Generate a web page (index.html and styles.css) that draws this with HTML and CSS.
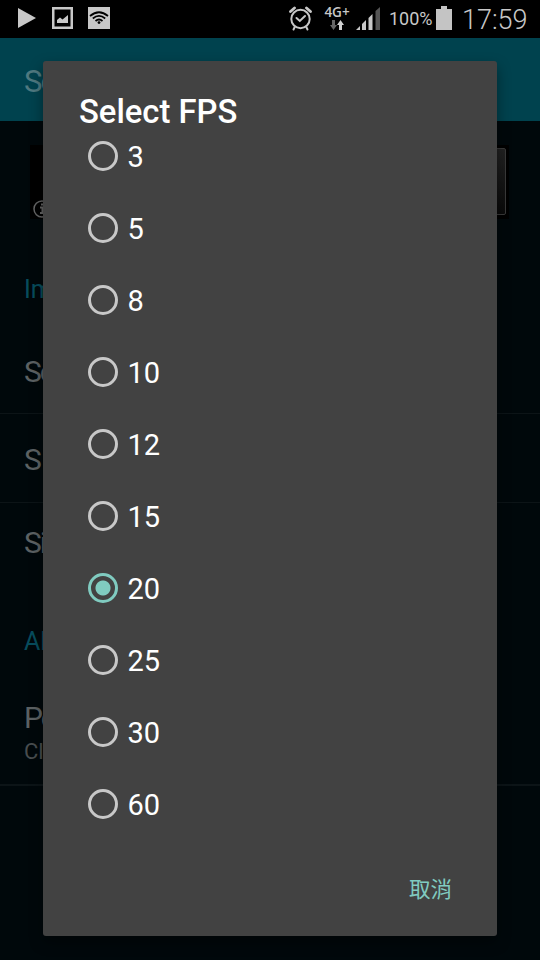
FILE: index.html
```
<!DOCTYPE html>
<html lang="zh-Hant">

<head>
  <meta charset="utf-8">
  <title>Select FPS</title>
  <link rel="stylesheet" href="styles.css">
</head>

<body>
  <div class="status-bar">
    <div class="status-left">
      <svg width="18" height="20" viewBox="0 0 18 20"><path d="M0 0L18 10L0 20Z" fill="#c8c8c8"/></svg>
      <svg width="21" height="22" viewBox="0 0 21 22">
        <path fill="#c8c8c8" fill-rule="evenodd" d="M0 0H21V22H0ZM2.500 2.500V19.500H18.500V2.500Z"/>
        <path fill="#c8c8c8" d="M5 16V13L8 10.500L10.500 12.500L16 8V16Z"/>
      </svg>
      <svg width="22" height="22" viewBox="0 0 22 22">
        <path fill="#c8c8c8" d="M0 0H22V22H0Z"/>
        <g fill="none" stroke="#000" stroke-width="1.7">
          <path d="M2 9Q11 1.5 20 9"/>
          <path d="M4.8 11.5Q11 6.2 17.2 11.5"/>
          <path d="M7.5 14Q11 11 14.5 14"/>
        </g>
        <circle cx="11" cy="15.6" r="1.4"/>
      </svg>
    </div>
    <div class="status-right">
      <svg class="alarm" width="23" height="25" viewBox="0 0 23 25" fill="none" stroke="#c8c8c8" stroke-linecap="round">
        <circle cx="11.5" cy="13" r="9.2" stroke-width="2"/>
        <path d="M7.5 12L10.8 15L16 10" stroke-width="2"/>
        <path d="M1.5 5.5L5.5 2M21.5 5.5L17.5 2" stroke-width="2.8"/>
        <path d="M5.5 21.5L4.5 23.5M17.5 21.5L18.5 23.5" stroke-width="2"/>
      </svg>
      <div class="network">
        <span>4G+</span>
        <svg width="14" height="10" viewBox="0 0 14 10">
          <path fill="#666" d="M2 0H5V5H7L3.5 10L0 5H2Z"/>
          <path fill="#d0d0d0" d="M9 10H12V5H14L10.5 0L7 5H9Z"/>
        </svg>
      </div>
      <svg class="signal" width="24" height="23" viewBox="0 0 24 23">
        <path fill="#c8c8c8" d="M0 23L4 19V23ZM6 17L10 13V23H6ZM12.500 11L16.500 7V23H12.500Z"/>
        <path fill="#555" d="M19.500 4L24 0V23H19.500Z"/>
      </svg>
      <span class="percent">100%</span>
      <svg class="battery" width="16" height="24" viewBox="0 0 16 24"><path fill="#c4c4c4" d="M5 0H11V3H16V24H0V3H5Z"/></svg>
      <span class="clock">17:59</span>
    </div>
  </div>

  <div class="settings">
    <div class="action-bar">Se</div>
    <div class="preview">
      <div class="preview-strip">
        <svg width="18" height="18" viewBox="0 0 18 18">
          <circle cx="9" cy="9" r="8" fill="none" stroke="#666" stroke-width="1.5"/>
          <path d="M7 7.500H9.500V13M7 13H12M8 4.500H10" fill="none" stroke="#666" stroke-width="2"/>
        </svg>
        <div class="preview-button"></div>
      </div>
    </div>
    <div class="category first">Im</div>
    <div class="row">Se</div>
    <div class="row second">S</div>
    <div class="row last">Si</div>
    <div class="category">Al</div>
    <div class="row summary">
      <span>Pe</span>
      <small>Cl</small>
    </div>
  </div>

  <div class="dialog">
    <h1>Select FPS</h1>
    <ul class="options">
      <li><i class="radio"></i>3</li>
      <li><i class="radio"></i>5</li>
      <li><i class="radio"></i>8</li>
      <li><i class="radio"></i>10</li>
      <li><i class="radio"></i>12</li>
      <li><i class="radio"></i>15</li>
      <li><i class="radio checked"></i>20</li>
      <li><i class="radio"></i>25</li>
      <li><i class="radio"></i>30</li>
      <li><i class="radio"></i>60</li>
    </ul>
    <div class="buttons">取消</div>
  </div>
</body>

</html>
```
FILE: styles.css
```
* {
  box-sizing: border-box;
}
body {
  margin: 0;
  width: 540px;
  height: 960px;
  overflow: hidden;
  position: relative;
  background: #00080b;
  font-family: Roboto, "Noto Sans CJK TC", sans-serif;
}
svg {
  display: block;
  flex: none;
}

/* status bar */
.status-bar {
  height: 38px;
  background: #000;
  color: #c8c8c8;
  display: flex;
  justify-content: space-between;
  padding: 0 13px 0 18px;
}
.status-left,
.status-right {
  display: flex;
  align-items: center;
  height: 36px;
}
.status-left {
  gap: 15px;
}
.status-left svg:first-child {
  margin-right: 1px;
}
.network {
  width: 28px;
  margin: 0 1px 0 11px;
  display: flex;
  flex-direction: column;
  align-items: center;
  font: 600 13.500px/13px "Open Sans", sans-serif;
}
.network svg {
  margin-top: 1px;
}
.signal {
  margin-left: 4px;
}
.percent {
  width: 43px;
  margin-left: 9px;
  font-size: 18px;
  padding-top: 1px;
}
.battery {
  margin-left: 4px;
}
.clock {
  width: 65px;
  margin-left: 10px;
  padding-top: 3px;
  font-size: 27px;
  font-weight: 300;
}

/* settings screen under the dialog */
.settings {
  color: #5c6163;
  font-size: 30px;
  letter-spacing: -2px;
}
.action-bar {
  height: 83px;
  padding: 4px 24px 0;
  display: flex;
  align-items: center;
  background: #00424e;
  color: #4f7980;
  font-size: 31px;
}
.preview {
  height: 127px;
  padding: 24px 31px 0 30px;
}
.preview-strip {
  height: 74px;
  padding: 3px 3px 0;
  display: flex;
  justify-content: space-between;
  align-items: flex-end;
  background: #000;
}
.preview-strip svg {
  margin-bottom: 1px;
}
.preview-button {
  width: 40px;
  height: 67px;
  margin-bottom: 4px;
  border: 1px solid #3a3a3a;
  border-radius: 2px;
  background: linear-gradient(#222, #0a0a0a);
}
.category {
  height: 118px;
  padding: 0 24px;
  display: flex;
  align-items: center;
  color: #074c5c;
  font-size: 25px;
  letter-spacing: 0;
}
.category.first {
  height: 82px;
}
.row {
  height: 84px;
  padding: 0 24px;
  display: flex;
  align-items: center;
  border-bottom: 1px solid #0c1417;
}
.row.second {
  height: 89px;
  padding-top: 3px;
}
.row.last {
  height: 79px;
  border-bottom: 0;
}
.row.summary {
  height: 86px;
  padding-top: 1px;
  flex-direction: column;
  align-items: flex-start;
  border-bottom: 2px solid #0c1417;
}
.summary span {
  line-height: 34px;
}
.summary small {
  color: #484d4f;
  font-size: 22px;
  line-height: 34px;
  letter-spacing: 0;
}

/* dialog */
.dialog {
  position: absolute;
  left: 43px;
  top: 61px;
  width: 454px;
  height: 875px;
  padding: 31px 36px 0;
  display: flex;
  flex-direction: column;
  border-radius: 3px;
  background: #424242;
  box-shadow: 0 6px 14px rgba(0, 0, 0, .4);
  color: #fff;
}
.dialog h1 {
  margin: 0;
  font-size: 32.800px;
  font-weight: 500;
  line-height: 40px;
}
.options {
  list-style: none;
  margin: -12px 0 0;
  padding: 0 0 0 9px;
  font-size: 29px;
}
.options li {
  height: 72px;
  padding-top: 2px;
  display: flex;
  align-items: center;
}
.radio {
  width: 30px;
  height: 30px;
  margin: -3px 9.500px 0 0;
  border: 3px solid #c8c8c8;
  border-radius: 50%;
}
.radio.checked {
  border-color: #80cbc0;
  background: radial-gradient(circle, #80cbc0 7px, transparent 8px);
}
.buttons {
  margin-top: 34px;
  padding-right: 9px;
  text-align: right;
  color: #80cbc0;
  font-size: 21.500px;
  line-height: 32px;
}
```
